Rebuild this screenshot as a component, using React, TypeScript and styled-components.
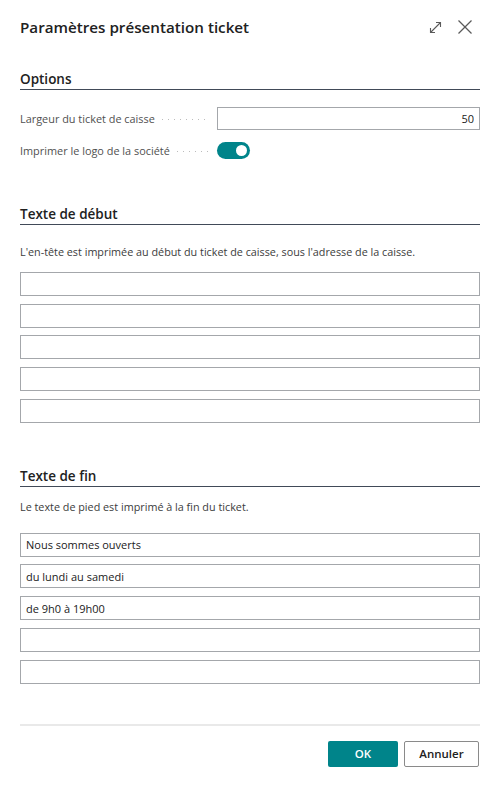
import { createGlobalStyle } from 'styled-components'
import styled from 'styled-components'

const colors = {
  text: '#212121',
  label: '#505050',
  desc: '#3c3c3c',
  border: '#a4a7ab',
  rule: '#414a58',
  teal: '#00848a',
  separator: '#e9e9e9',
  icon: '#5a5a5a',
}

const GlobalStyle = createGlobalStyle`
  html, body {
    margin: 0;
    padding: 0;
    background: #ffffff;
  }
  body {
    font-family: 'Open Sans', 'Noto Sans', sans-serif;
    color: ${colors.text};
  }
  * {
    box-sizing: border-box;
  }
`

const headerLines = ['', '', '', '', '']
const footerLines = ['Nous sommes ouverts', 'du lundi au samedi', 'de 9h0 à 19h00', '', '']

const ExpandIcon = () => (
  <svg width="13" height="13" viewBox="0 0 13 13" fill="none" stroke={colors.icon} strokeWidth="1.1">
    <path d="M1.5 11.5 L11.5 1.5" />
    <path d="M7 1.5 H11.5 V6" />
    <path d="M1.5 7 V11.5 H6" />
  </svg>
)

const CloseIcon = () => (
  <svg width="14" height="14" viewBox="0 0 14 14" fill="none" stroke={colors.icon} strokeWidth="1.3">
    <path d="M0.5 0.5 L13.5 13.5" />
    <path d="M13.5 0.5 L0.5 13.5" />
  </svg>
)

export default function App() {
  return (
    <>
      <GlobalStyle />
      <Dialog>
        <Header>
          <Title>Paramètres présentation ticket</Title>
          <HeaderActions>
            <IconButton aria-label="Agrandir">
              <ExpandIcon />
            </IconButton>
            <IconButton aria-label="Fermer">
              <CloseIcon />
            </IconButton>
          </HeaderActions>
        </Header>

        <SectionTitle $top={16}>Options</SectionTitle>
        <Fields>
          <FieldRow>
            <FieldLabel>
              <span>Largeur du ticket de caisse</span>
              <Leader />
            </FieldLabel>
            <NumberInput defaultValue="50" />
          </FieldRow>
          <FieldRow>
            <FieldLabel>
              <span>Imprimer le logo de la société</span>
              <Leader />
            </FieldLabel>
            <Toggle $on>
              <Knob />
            </Toggle>
          </FieldRow>
        </Fields>

        <SectionTitle $top={43}>Texte de début</SectionTitle>
        <Description $top={19}>
          L'en-tête est imprimée au début du ticket de caisse, sous l'adresse de la caisse.
        </Description>
        <LineList $top={12}>
          {headerLines.map((line, i) => (
            <LineInput key={i} defaultValue={line} />
          ))}
        </LineList>

        <SectionTitle $top={44}>Texte de fin</SectionTitle>
        <Description $top={12}>Le texte de pied est imprimé à la fin du ticket.</Description>
        <LineList $top={18}>
          {footerLines.map((line, i) => (
            <LineInput key={i} defaultValue={line} />
          ))}
        </LineList>

        <Separator />
        <Footer>
          <PrimaryButton>OK</PrimaryButton>
          <SecondaryButton>Annuler</SecondaryButton>
        </Footer>
      </Dialog>
    </>
  )
}

const Dialog = styled.div`
  width: 500px;
  height: 788px;
  padding: 0 20px 21px;
  display: flex;
  flex-direction: column;
  background: #ffffff;
`

const Header = styled.div`
  height: 54px;
  display: flex;
  align-items: center;
  justify-content: space-between;
`

const Title = styled.h1`
  margin: 0;
  font-size: 15.2px;
  line-height: 20px;
  font-weight: 600;
  color: ${colors.text};
`

const HeaderActions = styled.div`
  display: flex;
  align-items: center;
  gap: 16px;
  margin-right: 8px;
`

const IconButton = styled.button`
  border: none;
  background: transparent;
  padding: 0;
  display: flex;
  align-items: center;
  justify-content: center;
  cursor: pointer;
`

const SectionTitle = styled.h2<{ $top: number }>`
  margin: ${({ $top }) => $top}px 0 0;
  font-size: 13.5px;
  line-height: 19px;
  font-weight: 600;
  color: ${colors.text};
  border-bottom: 1.3px solid ${colors.rule};
`

const Fields = styled.div`
  margin-top: 16px;
  display: flex;
  flex-direction: column;
  gap: 8px;
`

const FieldRow = styled.div`
  height: 24px;
  display: flex;
  align-items: center;
`

const FieldLabel = styled.label`
  width: 197px;
  padding-right: 9px;
  display: flex;
  align-items: center;
  gap: 7px;
  font-size: 10.9px;
  color: ${colors.label};
  white-space: nowrap;
`

const Leader = styled.span`
  flex: 1;
  height: 1px;
  margin-top: 3px;
  background-image: linear-gradient(to right, #bcbcbc 1px, transparent 1px);
  background-size: 6px 1px;
  background-repeat: repeat-x;
`

const NumberInput = styled.input`
  flex: 1;
  height: 23px;
  border: 1px solid ${colors.border};
  border-radius: 0;
  padding: 0 5px;
  text-align: right;
  font-family: inherit;
  font-size: 11px;
  color: ${colors.text};
  outline: none;
`

const Toggle = styled.div<{ $on?: boolean }>`
  width: 33px;
  height: 17px;
  border-radius: 9px;
  background: ${({ $on }) => ($on ? colors.teal : '#ffffff')};
  display: flex;
  align-items: center;
  justify-content: ${({ $on }) => ($on ? 'flex-end' : 'flex-start')};
  padding: 0 3px;
`

const Knob = styled.span`
  width: 11px;
  height: 11px;
  border-radius: 50%;
  background: #ffffff;
`

const Description = styled.p<{ $top: number }>`
  margin: ${({ $top }) => $top}px 0 0;
  font-size: 10.8px;
  line-height: 16px;
  color: ${colors.desc};
`

const LineList = styled.div<{ $top: number }>`
  margin-top: ${({ $top }) => $top}px;
  display: flex;
  flex-direction: column;
  gap: 7.7px;
`

const LineInput = styled.input`
  width: 100%;
  height: 24px;
  border: 1px solid ${colors.border};
  border-radius: 0;
  padding: 0 5px;
  font-family: inherit;
  font-size: 11px;
  color: ${colors.text};
  outline: none;
`

const Separator = styled.div`
  margin-top: 40px;
  height: 2px;
  background: ${colors.separator};
`

const Footer = styled.div`
  margin-top: 15px;
  display: flex;
  justify-content: flex-end;
  gap: 6px;
  padding-right: 1px;
`

const PrimaryButton = styled.button`
  width: 70px;
  height: 26px;
  border: none;
  border-radius: 2px;
  background: ${colors.teal};
  color: #ffffff;
  font-family: inherit;
  font-size: 11.5px;
  font-weight: 600;
  cursor: pointer;
`

const SecondaryButton = styled.button`
  width: 75px;
  height: 26px;
  border: 1px solid #8a8a8a;
  border-radius: 2px;
  background: #ffffff;
  color: ${colors.text};
  font-family: inherit;
  font-size: 11.5px;
  font-weight: 600;
  cursor: pointer;
`
